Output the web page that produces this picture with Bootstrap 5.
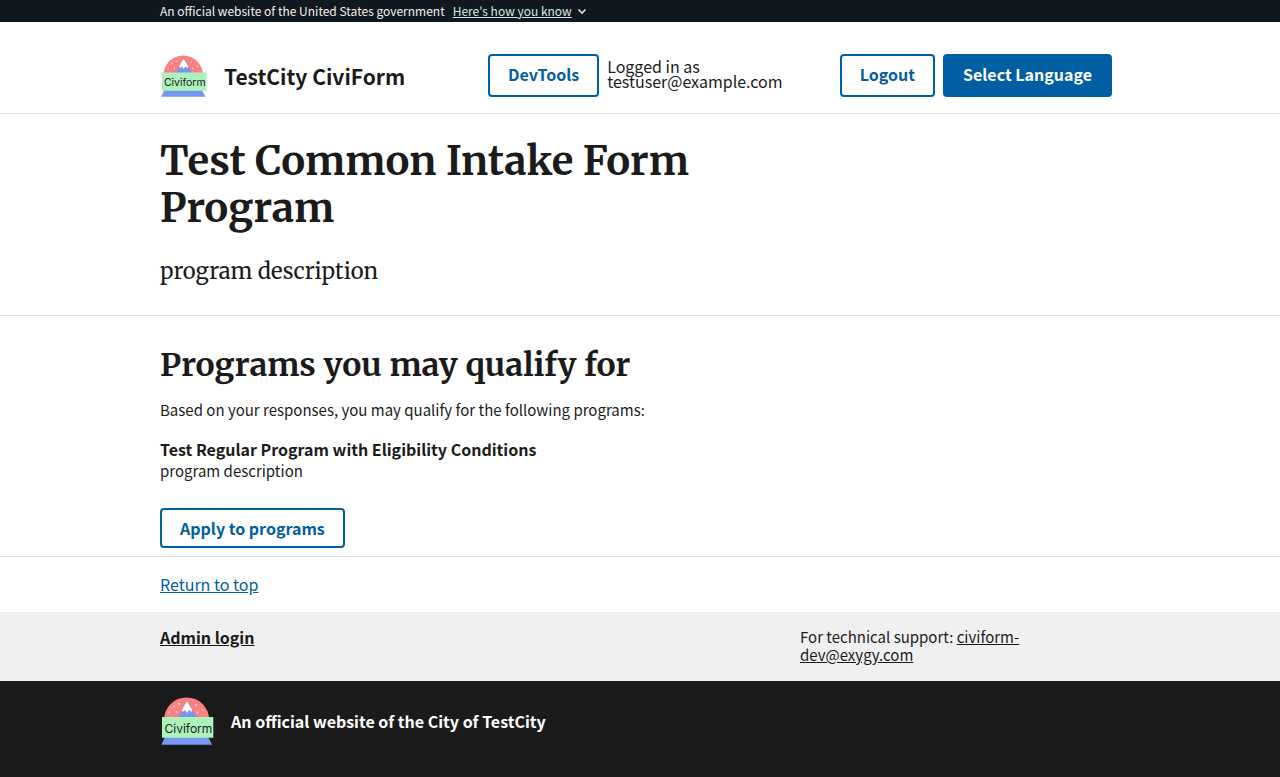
<!DOCTYPE html>
<html lang="en">
<head>
<meta charset="utf-8">
<meta name="viewport" content="width=device-width, initial-scale=1">
<title>Programs you may qualify for</title>
<link href="https://cdn.jsdelivr.net/npm/bootstrap@5.3.0/dist/css/bootstrap.min.css" rel="stylesheet">
<style>
  body { font-family: "Source Sans Pro", "Noto Sans CJK JP", "Noto Sans", sans-serif; font-size: 15px; line-height: 22px; color: #1b1b1b; background: #1b1b1b; }
  .page-wrap { max-width: 1024px; margin: 0 auto; padding: 0 32px; }
  .gov-banner { background: #11181f; color: #f0f0f0; font-size: 12px; line-height: 22px; }
  .banner-toggle { background: none; color: #cfe8e0; }
  .banner-toggle span { text-decoration: underline; }
  .rule-below { border-bottom: 1px solid #dfe1e2; }
  .site-header { padding: 32px 0 16px; }
  .site-name { font-size: 21px; font-weight: 700; line-height: 24px; color: #1b1b1b; }
  .user-note { font-size: 16px; line-height: 15px; padding-bottom: 4px; }
  .strong-text { font-size: 16px; font-weight: 700; }
  .btn-site { --bs-btn-font-weight: 700; --bs-btn-font-size: 16px; --bs-btn-line-height: 16px; --bs-btn-padding-x: 18px; --bs-btn-padding-y: 10px; --bs-btn-border-width: 2px; --bs-btn-border-radius: 4px; --bs-btn-color: #005ea2; --bs-btn-border-color: #005ea2; --bs-btn-hover-color: #1a4480; --bs-btn-hover-border-color: #1a4480; white-space: nowrap; }
  .btn-solid { --bs-btn-color: #fff; --bs-btn-bg: #005ea2; --bs-btn-hover-color: #fff; --bs-btn-hover-bg: #1a4480; }
  .nav-actions .btn-site { padding-bottom: 13px; }
  h1, h2, .intro { font-family: Merriweather, "DejaVu Serif Condensed", "DejaVu Serif", serif; }
  h1 { font-size: 40px; line-height: 47px; font-weight: 700; max-width: 640px; }
  h2 { font-size: 32px; line-height: 43px; font-weight: 700; margin-bottom: 12px; }
  .intro { font-size: 22px; line-height: 31px; }
  .lead-in { margin-bottom: 17px; }
  .program-text { margin-bottom: 26px; }
  .top-link { color: #005ea2; font-size: 16px; }
  .top-row { line-height: 23px; }
  .footer-links { background: #f0f0f0; line-height: 18px; padding: 16px 0 17px; }
  .footer-links a { color: #1b1b1b; }
  .footer-id { background: #1b1b1b; color: #fff; }
  .logo-head { width: 48px; height: 42px; }
  .logo-foot { width: 55px; height: 48px; }
</style>
</head>
<body>
<svg class="d-none" aria-hidden="true">
  <symbol id="logo" viewBox="0 0 55 48">
    <path d="M4 23a22.6 22.6 0 0 1 45.200 0z" fill="#fa8182"/>
    <path d="M17.500 22 27 4.500 37.500 22z" fill="#7498f1"/>
    <path d="M27 4.300c-1.600 1.200-3.500 5.400-5.200 8.600l.8 2.300 2.300-1.900 2.200 3 2.200-3.200 2.400 2.300.6-2.500C30.600 9.800 28.600 5.600 27 4.300z" fill="#fff" stroke="#8e8790" stroke-width=".4"/>
    <g fill="#ffd7d7"><circle cx="14" cy="9.500" r=".9"/><circle cx="19" cy="7" r=".9"/><circle cx="9.500" cy="15.500" r=".9"/><circle cx="16.500" cy="15" r=".9"/><circle cx="36" cy="8" r=".9"/><circle cx="42.500" cy="13" r=".9"/><circle cx="37.500" cy="15.500" r=".9"/></g>
    <path d="M5 40h43.200L52 47.700H1.300z" fill="#7498f1"/>
    <path d="M2 20h51.300v20.800H2z" fill="#aef2bb"/>
    <text x="4.500" y="35.500" font-family="Inter, sans-serif" font-size="12" fill="#16241a">Civiform</text>
  </symbol>
</svg>

<div class="gov-banner">
  <div class="page-wrap d-flex">
    <span>An official website of the United States government</span>
    <button type="button" class="banner-toggle border-0 p-0 ms-2 d-flex align-items-center"><span>Here's how you know</span>
      <svg class="ms-1" width="12" height="12" viewBox="0 0 12 12" fill="none" stroke="currentColor" stroke-width="1.600" aria-hidden="true"><path d="m2.500 4.500 3.500 3.500 3.500-3.500"/></svg>
    </button>
  </div>
</div>

<header class="site-header bg-white rule-below">
  <div class="page-wrap">
    <div class="row g-0 align-items-center">
      <a class="col-4 d-flex align-items-center gap-3 text-decoration-none" href="#">
        <svg class="logo-head" role="img" aria-label="TestCity logo"><use href="#logo"/></svg>
        <span class="site-name">TestCity CiviForm</span>
      </a>
      <nav class="col-8 px-2 d-flex align-items-center gap-2 nav-actions">
        <button type="button" class="btn btn-site">DevTools</button>
        <span class="user-note me-auto">Logged in as<br>testuser@example.com</span>
        <button type="button" class="btn btn-site">Logout</button>
        <button type="button" class="btn btn-site btn-solid">Select Language</button>
      </nav>
    </div>
  </div>
</header>

<main class="bg-white">
  <section class="rule-below pt-4 pb-4">
    <div class="page-wrap">
      <h1 class="mb-4">Test Common Intake Form Program</h1>
      <p class="intro mb-1">program description</p>
    </div>
  </section>
  <section class="rule-below pt-4 pb-2">
    <div class="page-wrap pt-1">
      <h2>Programs you may qualify for</h2>
      <p class="lead-in">Based on your responses, you may qualify for the following programs:</p>
      <div class="strong-text">Test Regular Program with Eligibility Conditions</div>
      <p class="program-text">program description</p>
      <button type="button" class="btn btn-site">Apply to programs</button>
    </div>
  </section>
</main>

<footer>
  <div class="bg-white py-3 top-row"><div class="page-wrap"><a class="top-link" href="#">Return to top</a></div></div>
  <div class="footer-links">
    <div class="page-wrap">
      <div class="row g-0">
        <div class="col-8"><a class="strong-text" href="#">Admin login</a></div>
        <div class="col-4">For technical support: <a href="mailto:civiform-dev@exygy.com">civiform-<br>dev@exygy.com</a></div>
      </div>
    </div>
  </div>
  <div class="footer-id py-3">
    <div class="page-wrap d-flex align-items-center gap-3">
      <svg class="logo-foot" role="img" aria-label="TestCity logo"><use href="#logo"/></svg>
      <span class="strong-text">An official website of the City of TestCity</span>
    </div>
  </div>
</footer>
<script src="https://cdn.jsdelivr.net/npm/bootstrap@5.3.0/dist/js/bootstrap.bundle.min.js"></script>
</body>
</html>
